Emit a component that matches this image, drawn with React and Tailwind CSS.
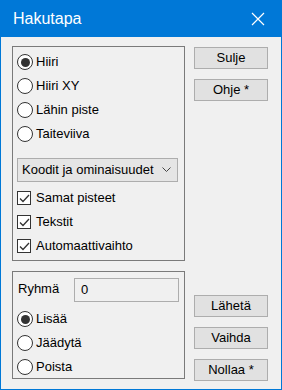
import React from "react";

function Radio({ label, checked }) {
  return (
    <label className="flex items-center h-6">
      <span className="w-[16px] h-[16px] rounded-full border border-[#333] bg-white flex items-center justify-center">
        {checked && <span className="w-[9px] h-[9px] rounded-full bg-[#333]" />}
      </span>
      <span className="ml-[3px]">{label}</span>
    </label>
  );
}

function Check({ label }) {
  return (
    <label className="flex items-center h-6">
      <span className="w-[14px] h-[14px] border border-[#333] bg-white flex items-center justify-center">
        <svg width="11" height="9" viewBox="0 0 11 9" fill="none">
          <path d="M1 4.5 L4 7.5 L10 1" stroke="#333" strokeWidth="1.3" />
        </svg>
      </span>
      <span className="ml-[5px]">{label}</span>
    </label>
  );
}

function Button({ children }) {
  return (
    <button className="w-[74px] h-[22px] bg-[#e1e1e1] border border-[#adadad] text-[13px] text-black">
      {children}
    </button>
  );
}

export default function App() {
  return (
    <div
      className="w-[282px] h-[390px] bg-[#f0f0f0] border border-[#0078d7] flex flex-col text-[13px] text-black"
      style={{ fontFamily: '"Liberation Sans", Arial, sans-serif' }}
    >
      <div className="h-[36px] bg-[#0078d7] flex items-center justify-between pl-3 pr-4 text-white">
        <span className="text-[16px]">Hakutapa</span>
        <svg width="14" height="14" viewBox="0 0 14 14">
          <path d="M1 1 L13 13 M13 1 L1 13" stroke="white" strokeWidth="1.2" />
        </svg>
      </div>
      <div className="flex flex-1 pl-[11px] pt-[9px] pb-[8px]">
        <div className="w-[173px] flex flex-col">
          <div className="h-[215px] border border-[#7a7a7a] pl-[4px] pr-[6px] pt-[3px]">
            <Radio label="Hiiri" checked />
            <Radio label="Hiiri XY" />
            <Radio label="Lähin piste" />
            <Radio label="Taiteviiva" />
            <div className="mt-[12px] h-6 bg-[#e5e5e5] border border-[#adadad] flex items-center justify-between pl-[4px] pr-[6px]">
              <span>Koodit ja ominaisuudet</span>
              <svg width="9" height="6" viewBox="0 0 9 6" fill="none">
                <path d="M0.5 0.5 L4.5 4.5 L8.5 0.5" stroke="#444" strokeWidth="1" />
              </svg>
            </div>
            <div className="mt-[4px]">
              <Check label="Samat pisteet" />
              <Check label="Tekstit" />
              <Check label="Automaattivaihto" />
            </div>
          </div>
          <div className="mt-[10px] h-[108px] border border-[#7a7a7a] pl-[4px] pr-[5px] pt-[6px]">
            <div className="flex h-6">
              <span className="ml-[1px] mt-[1px]">Ryhmä</span>
              <div className="ml-auto w-[105px] h-6 border border-[#adadad] flex items-center pl-[6px]">0</div>
            </div>
            <div className="mt-[5px]">
              <Radio label="Lisää" checked />
              <Radio label="Jäädytä" />
              <Radio label="Poista" />
            </div>
          </div>
        </div>
        <div className="ml-[9px] flex flex-col">
          <div className="mt-[1px] flex flex-col gap-[10px]">
            <Button>Sulje</Button>
            <Button>Ohje *</Button>
          </div>
          <div className="mt-auto flex flex-col gap-[10px]">
            <Button>Lähetä</Button>
            <Button>Vaihda</Button>
            <Button>Nollaa *</Button>
          </div>
        </div>
      </div>
    </div>
  );
}
